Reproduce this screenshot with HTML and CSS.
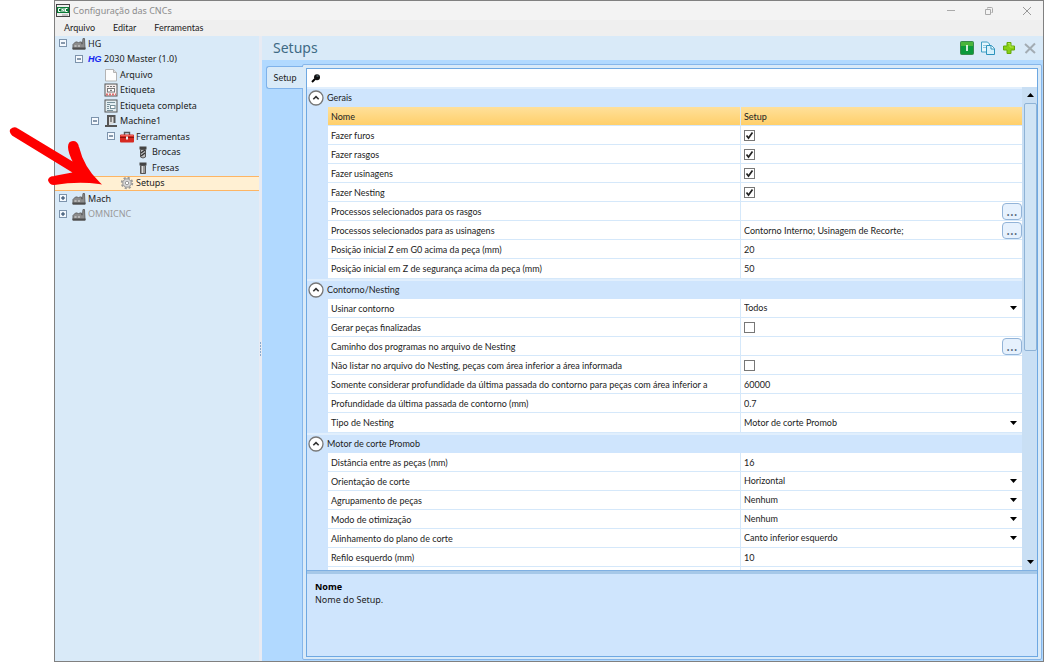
FILE: index.html
```html
<!DOCTYPE html>
<html lang="pt-BR">
	<head>
		<meta charset="UTF-8">
		<title>Configuração das CNCs</title>
		<link rel="stylesheet" href="styles.css">
	</head>
	<body>
		<svg class="defs" width="0" height="0" aria-hidden="true">
			<symbol id="factory" viewBox="0 0 14 13">
				<path d="M1 12V7.500L3.500 5H5.500L6.500 6L7.500 5H9.500V7H10.500L11 1.500H12.500L13 12Z" fill="#8c8c8c" stroke="#666"/>
				<path d="M2.500 8.500h2v1h-2zM6 8.500h2v1h-2z" fill="#e2e2e2"/>
				<path d="M.5 11.500h13" stroke="#4d4d4d" stroke-width="2"/>
			</symbol>
			<symbol id="minus" viewBox="0 0 9 9">
				<rect x=".5" y=".5" width="7" height="7" fill="#f4f9fe" stroke="#7c93ac"/>
				<path d="M2 4h4" stroke="#1d3a5c"/>
			</symbol>
			<symbol id="plus" viewBox="0 0 9 9">
				<rect x=".5" y=".5" width="7" height="7" fill="#f4f9fe" stroke="#7c93ac"/>
				<path d="M2 4h4M4 2v4" stroke="#1d3a5c"/>
			</symbol>
			<symbol id="up" viewBox="0 0 16 16">
				<circle cx="8" cy="8" r="7" fill="#fff" stroke="#777" stroke-width="1.300"/>
				<path d="M5.300 9.300L8 6.600l2.700 2.700" fill="none" stroke="#333" stroke-width="1.600"/>
			</symbol>
		</svg>
		<div class="window">
			<div class="titlebar">
				<svg class="logo" width="14" height="13" viewBox="0 0 14 13"><rect x=".5" y=".5" width="13" height="12" fill="#eee" stroke="#444"/><rect x="1" y="3" width="12" height="6" fill="#087a35"/><path d="M4.500 4.500h-2v3h2M6 8V4.500l2 3V4M11.500 4.500h-2v3h2" fill="none" stroke="#fff"/><path d="M6 11h6" stroke="#999"/></svg>
				<span class="caption">Configuração das CNCs</span>
				<button class="winbtn" aria-label="Minimizar"><svg width="10" height="10" viewBox="0 0 10 10"><path d="M1 4.500h8" stroke="#aaa"/></svg></button>
				<button class="winbtn" aria-label="Restaurar"><svg width="10" height="10" viewBox="0 0 10 10"><path d="M3.500 2.500v-1h4q1 0 1 1v4h-1M1.500 3.500h5v5h-5z" fill="none" stroke="#aaa"/></svg></button>
				<button class="winbtn" aria-label="Fechar"><svg width="10" height="10" viewBox="0 0 10 10"><path d="M1 1l8 8M9 1l-8 8" stroke="#999"/></svg></button>
			</div>
			<nav class="menubar">
				<button>Arquivo</button>
				<button>Editar</button>
				<button>Ferramentas</button>
			</nav>
			<div class="main">
				<aside class="side">
					<ul class="tree">
						<li class="d0"><button class="exp" aria-label="Recolher HG"><svg width="9" height="9"><use href="#minus"/></svg></button><svg width="14" height="13"><use href="#factory"/></svg><span>HG</span></li>
						<li class="d1"><button class="exp" aria-label="Recolher 2030 Master"><svg width="9" height="9"><use href="#minus"/></svg></button><i class="brand">HG</i><span>2030 Master (1.0)</span></li>
						<li class="d2"><b class="exp"></b><svg width="14" height="14" viewBox="0 0 14 14"><path d="M1.500 1.500h8l3 3v8.500h-11z" fill="#fdfdfd" stroke="#b4b4b4"/><path d="M9.500 1.500v3h3" fill="#ddd" stroke="#b4b4b4"/></svg><span>Arquivo</span></li>
						<li class="d2"><b class="exp"></b><svg width="14" height="14" viewBox="0 0 14 14"><rect x="1" y="1" width="12" height="12" fill="#f5eeee" stroke="#555"/><path d="M3 3.500h8" stroke="#777" stroke-dasharray="2 1"/><rect x="3.500" y="5.500" width="7" height="3.500" fill="#fff" stroke="#777"/><path d="M6 7.300h2" stroke="#555"/><path d="M2 11.500h10" stroke="#e07070" stroke-width="2" stroke-dasharray="2 1"/></svg><span>Etiqueta</span></li>
						<li class="d2"><b class="exp"></b><svg width="14" height="14" viewBox="0 0 14 14"><rect x="1" y="1" width="12" height="12" fill="#e3eef2" stroke="#555"/><path d="M3 3.500h8M3 5.500h3M3 7.500h2M3 9.500h2M3 11.500h6" stroke="#78909a"/><rect x="6.500" y="6.500" width="4.500" height="3" fill="#fff" stroke="#78909a"/></svg><span>Etiqueta completa</span></li>
						<li class="d2"><button class="exp" aria-label="Recolher Machine1"><svg width="9" height="9"><use href="#minus"/></svg></button><svg width="14" height="14" viewBox="0 0 14 14"><path d="M4 11.500V2h6.500v7" fill="#ddd" stroke="#555" stroke-width="2"/><path d="M7 3v5" stroke="#777" stroke-width="1.600"/><path d="M1 12h12" stroke="#555" stroke-width="2"/></svg><span>Machine1</span></li>
						<li class="d3"><button class="exp" aria-label="Recolher Ferramentas"><svg width="9" height="9"><use href="#minus"/></svg></button><svg width="14" height="14" viewBox="0 0 14 14"><path d="M4.500 5V2.500h5V5" fill="none" stroke="#555" stroke-width="1.400"/><rect x="0" y="4.500" width="14" height="8" rx="1" fill="#d62a22"/><path d="M0 7.500h14" stroke="#8e1410"/><path d="M1 5.500h12" stroke="#f0655a"/><rect x="6" y="6.500" width="2" height="3" fill="#eee"/></svg><span>Ferramentas</span></li>
						<li class="d4"><b class="exp"></b><svg width="14" height="14" viewBox="0 0 14 14"><path d="M3.500 1.500h7v3h-7z" fill="#444"/><path d="M4.500 4.500h5v7.500l-2.500 1-2.500-1z" fill="#bbb" stroke="#555"/><path d="M5 8l4-3M5 11l4-3" stroke="#333" stroke-width="1.300"/></svg><span>Brocas</span></li>
						<li class="d4"><b class="exp"></b><svg width="14" height="14" viewBox="0 0 14 14"><path d="M3.500 1.500h7v3h-7z" fill="#444"/><path d="M4.500 4.500h5v8h-5z" fill="#999" stroke="#555"/><path d="M6.500 5v7" stroke="#ddd"/></svg><span>Fresas</span></li>
						<li class="d3 selected"><b class="exp"></b><svg width="14" height="14" viewBox="0 0 14 14"><circle cx="7" cy="7" r="5.300" fill="none" stroke="#999" stroke-width="1.800" stroke-dasharray="2.200 1.960"/><circle cx="7" cy="7" r="4.200" fill="#d8d8d8" stroke="#999"/><circle cx="7" cy="7" r="1.700" fill="#fff" stroke="#999"/></svg><span>Setups</span></li>
						<li class="d0"><button class="exp" aria-label="Expandir Mach"><svg width="9" height="9"><use href="#plus"/></svg></button><svg width="14" height="13"><use href="#factory"/></svg><span>Mach</span></li>
						<li class="d0 off"><button class="exp" aria-label="Expandir OMNICNC"><svg width="9" height="9"><use href="#plus"/></svg></button><svg width="14" height="13"><use href="#factory"/></svg><span>OMNICNC</span></li>
					</ul>
				</aside>
				<div class="splitter"><svg width="3" height="16" viewBox="0 0 3 16"><path d="M1.500 1v15" stroke="#8aa9cc" stroke-width="1" stroke-dasharray="2 1"/></svg></div>
				<section class="content">
					<header class="head">
						<h1>Setups</h1>
						<button aria-label="Ativar"><svg width="14" height="14" viewBox="0 0 14 14"><rect x=".5" y=".5" width="13" height="13" rx="1" fill="#0c9a3c" stroke="#3b8a4c"/><path d="M1 1h12v4H1z" fill="#49b53c"/><path d="M7 4v6" stroke="#fff" stroke-width="1.600"/></svg></button>
						<button aria-label="Duplicar"><svg width="14" height="14" viewBox="0 0 14 14"><path d="M.5 1h6l2 2v8h-8z" fill="#e4f5fc" stroke="#3f9fc4"/><path d="M2 4.500h3M2 6.500h3" stroke="#8cc8e0"/><path d="M5.500 4.500h5l3 3v6h-8z" fill="#d5f0fb" stroke="#2d93bd"/><path d="M10 4.500v3.500h3.500" fill="#fff" stroke="#2d93bd"/></svg></button>
						<button aria-label="Adicionar"><svg width="14" height="14" viewBox="0 0 14 14"><path d="M5 1.500h4V5h3.500v4H9v3.500H5V9H1.500V5H5z" fill="#86d012" stroke="#65a80b"/><path d="M6 2.500h2V6h3.500" fill="none" stroke="#b4e84e"/></svg></button>
						<button aria-label="Excluir"><svg width="14" height="14" viewBox="0 0 14 14"><path d="M2 3l10 9M12 2.500L2.500 12" stroke="#a3acb3" stroke-width="2"/></svg></button>
					</header>
					<div class="body">
						<div class="tabs"><button class="tab">Setup</button></div>
						<div class="frame">
							<div class="panel">
								<div class="search">
									<svg width="10" height="10" viewBox="0 0 10 10"><circle cx="6" cy="4.300" r="3" fill="#111"/><path d="M4 6L1 9" stroke="#000" stroke-width="2"/><path d="M5.500 3h2" stroke="#6c8f9c"/></svg>
									<input type="text" aria-label="Pesquisar">
								</div>
								<div class="scroll">
									<div class="view">
										<table class="props">
											<colgroup><col class="gutter"><col class="name"><col></colgroup>
											<tbody>
												<tr class="group"><th colspan="3"><button aria-label="Recolher Gerais"><svg width="16" height="16"><use href="#up"/></svg></button><span>Gerais</span></th></tr>
												<tr class="current"><td></td><th><label for="p1">Nome</label></th><td><input id="p1" type="text" value="Setup"></td></tr>
												<tr><td></td><th><label for="p2">Fazer furos</label></th><td><input id="p2" type="checkbox" checked></td></tr>
												<tr><td></td><th><label for="p3">Fazer rasgos</label></th><td><input id="p3" type="checkbox" checked></td></tr>
												<tr><td></td><th><label for="p4">Fazer usinagens</label></th><td><input id="p4" type="checkbox" checked></td></tr>
												<tr><td></td><th><label for="p5">Fazer Nesting</label></th><td><input id="p5" type="checkbox" checked></td></tr>
												<tr><td></td><th><label for="p6">Processos selecionados para os rasgos</label></th><td><div class="pick"><input id="p6" type="text"><button aria-label="Selecionar rasgos">...</button></div></td></tr>
												<tr><td></td><th><label for="p7">Processos selecionados para as usinagens</label></th><td><div class="pick"><input id="p7" type="text" value="Contorno Interno; Usinagem de Recorte;"><button aria-label="Selecionar usinagens">...</button></div></td></tr>
												<tr><td></td><th><label for="p8">Posição inicial Z em G0 acima da peça (mm)</label></th><td><input id="p8" type="text" value="20"></td></tr>
												<tr><td></td><th><label for="p9">Posição inicial em Z de segurança acima da peça (mm)</label></th><td><input id="p9" type="text" value="50"></td></tr>
											</tbody>
											<tbody>
												<tr class="group"><th colspan="3"><button aria-label="Recolher Contorno/Nesting"><svg width="16" height="16"><use href="#up"/></svg></button><span>Contorno/Nesting</span></th></tr>
												<tr><td></td><th><label for="p10">Usinar contorno</label></th><td><select id="p10"><option>Todos</option></select></td></tr>
												<tr><td></td><th><label for="p11">Gerar peças finalizadas</label></th><td><input id="p11" type="checkbox"></td></tr>
												<tr><td></td><th><label for="p12">Caminho dos programas no arquivo de Nesting</label></th><td><div class="pick"><input id="p12" type="text"><button aria-label="Selecionar caminho">...</button></div></td></tr>
												<tr><td></td><th><label for="p13">Não listar no arquivo do Nesting, peças com área inferior a área informada</label></th><td><input id="p13" type="checkbox"></td></tr>
												<tr><td></td><th><label for="p14">Somente considerar profundidade da última passada do contorno para peças com área inferior a</label></th><td><input id="p14" type="text" value="60000"></td></tr>
												<tr><td></td><th><label for="p15">Profundidade da última passada de contorno (mm)</label></th><td><input id="p15" type="text" value="0.7"></td></tr>
												<tr><td></td><th><label for="p16">Tipo de Nesting</label></th><td><select id="p16"><option>Motor de corte Promob</option></select></td></tr>
											</tbody>
											<tbody>
												<tr class="group"><th colspan="3"><button aria-label="Recolher Motor de corte Promob"><svg width="16" height="16"><use href="#up"/></svg></button><span>Motor de corte Promob</span></th></tr>
												<tr><td></td><th><label for="p17">Distância entre as peças (mm)</label></th><td><input id="p17" type="text" value="16"></td></tr>
												<tr><td></td><th><label for="p18">Orientação de corte</label></th><td><select id="p18"><option>Horizontal</option></select></td></tr>
												<tr><td></td><th><label for="p19">Agrupamento de peças</label></th><td><select id="p19"><option>Nenhum</option></select></td></tr>
												<tr><td></td><th><label for="p20">Modo de otimização</label></th><td><select id="p20"><option>Nenhum</option></select></td></tr>
												<tr><td></td><th><label for="p21">Alinhamento do plano de corte</label></th><td><select id="p21"><option>Canto inferior esquerdo</option></select></td></tr>
												<tr><td></td><th><label for="p22">Refilo esquerdo (mm)</label></th><td><input id="p22" type="text" value="10"></td></tr>
												<tr><td></td><th></th><td></td></tr>
											</tbody>
										</table>
									</div>
									<div class="scrollbar">
										<button aria-label="Rolar para cima"><svg width="7" height="4" viewBox="0 0 7 4"><path d="M0 4h7L3.500 0z"/></svg></button>
										<div class="track"><div class="thumb"></div></div>
										<button aria-label="Rolar para baixo"><svg width="7" height="4" viewBox="0 0 7 4"><path d="M0 0h7L3.500 4z"/></svg></button>
									</div>
								</div>
								<div class="help">
									<h2>Nome</h2>
									<p>Nome do Setup.</p>
								</div>
							</div>
						</div>
					</div>
				</section>
			</div>
		</div>
		<svg class="arrow" width="94" height="64" viewBox="8 124 94 64" aria-hidden="true"><path d="M17 129L75 164Q69 153 69 147Q69 142 73 142Q77 142 78 147Q83 168 99 183Q78 180 54 184Q50 184 49 180Q50 177 54 177L75 173L13 135Q10 132 11 130Q14 127 17 129Z" fill="#fe0000" stroke="#fe0000" stroke-width="2"/></svg>
	</body>
</html>
```

FILE: styles.css
```css
*{margin: 0;padding: 0;box-sizing: border-box;}
body{background: #fff;font: 9px/12px "Noto Sans","Open Sans",sans-serif;color: #222;}
button,input,select{font: inherit;color: inherit;border: 0;background: none;}
svg{display: block;flex: none;}
ul{list-style: none;}
.defs{position: absolute;}

.window{margin-left: 54px;height: 100vh;border: 1px solid #808080;display: flex;flex-direction: column;background: #f3f3f3;}
.titlebar{height: 19px;display: flex;align-items: center;padding: 0 1px;}
.caption{flex: 1;margin-left: 3px;color: #8c8c8c;}
.winbtn{width: 38px;height: 18px;display: flex;align-items: center;justify-content: center;}
.winbtn:last-child{margin-right: -4px;}
.menubar{height: 16px;background: #efefef;display: flex;align-items: center;gap: 18px;padding-left: 9px;font: 9px/12px Lato,sans-serif;}
.main{flex: 1;min-height: 0;display: flex;}

/* arvore */
.side{width: 204px;background: #d9eaf8;}
.tree{height: 186px;display: flex;flex-direction: column;}
.tree li{flex: 1;display: flex;align-items: center;padding-left: 4px;}
.tree li.d1{padding-left: 20px;}
.tree li.d2{padding-left: 36px;}
.tree li.d3{padding-left: 52px;}
.tree li.d4{padding-left: 68px;}
.tree span{margin-left: 2px;white-space: nowrap;}
.tree .selected{background: #fff0d3;box-shadow: inset 0 1px #fdb564,inset 0 -1px #fdb564;}
.tree .off span{color: #999;}
.exp{width: 9px;height: 9px;margin-right: 4px;}
.brand{width: 14px;font: italic bold 9px/12px "Liberation Sans",sans-serif;color: #1226f0;}
.splitter{width: 3px;background: #e8ebf3;display: flex;align-items: center;}

/* conteudo */
.content{flex: 1;min-width: 0;display: flex;flex-direction: column;background: #b1d9ff;}
.head{height: 24px;display: flex;align-items: center;gap: 7px;padding: 0 6px 0 11px;background: #d9eaf8;}
.head h1{flex: 1;font-size: 14px;line-height: 20px;font-weight: normal;color: #3f6a85;}
.body{flex: 1;min-height: 0;display: flex;padding: 4px 1px 1px 4px;}
.tabs{width: 37px;padding-top: 2px;margin-right: -1px;z-index: 1;}
.tab{width: 37px;height: 23px;font: 9px/12px Lato,sans-serif;background: #d9eaf8;border: 1px solid #7fb2ea;border-right: 0;border-radius: 3px 0 0 3px;}
.frame{flex: 1;min-width: 0;display: flex;padding: 3px 3px 2px;background: #d9eaf8;border: 1px solid #86b6ea;border-radius: 2px;}
.panel{flex: 1;min-width: 0;display: flex;flex-direction: column;border: 1px solid #6ea8e2;background: #cfe5fd;}
.search{height: 18px;display: flex;align-items: center;gap: 4px;padding-left: 4px;background: #fff;}
.search input{flex: 1;min-width: 0;outline: 0;}
.scroll{flex: 1;min-height: 0;display: flex;}
.view{flex: 1;min-width: 0;overflow: hidden;}

.props{width: 100%;table-layout: fixed;border-collapse: separate;border-spacing: 0;font: 9px/12px Lato,sans-serif;}
.gutter{width: 21px;}
.name{width: 412px;}
.props th{font-weight: normal;text-align: left;}
.props tr{height: 19px;}
.props th,.props td{height: 19px;background: #fff;border-bottom: 1px solid #d5e8fa;padding: 0 0 0 3px;white-space: nowrap;overflow: hidden;}
.props th{padding-top: 1px;}
.props td:first-child{background: none;border: 0;}
.props td:last-child{border-left: 1px solid #d5e8fa;}
.props tr:last-child th,.props tr:last-child td{height: 20px;}
.props .group th{height: 20px;padding: 0 0 0 1px;background: #cfe5fd;border-top: 2px solid #e1effd;border-bottom: 0;}
.group button{width: 16px;height: 16px;vertical-align: middle;}
.group span{margin-left: 3px;vertical-align: middle;}
.props .current th,.props .current td:last-child{background: linear-gradient(#ffe09a,#ffcf6a);}
.props input[type=text],.props select{display: block;width: 100%;height: 14px;outline: 0;}
.props select{appearance: none;background: url("data:image/svg+xml,%3Csvg xmlns='http://www.w3.org/2000/svg' width='7' height='4'%3E%3Cpath d='M0 0h7L3.5 4z'/%3E%3C/svg%3E") no-repeat right 5px center;}
.props input[type=checkbox]{appearance: none;display: block;width: 11px;height: 11px;border: 1px solid #777;background: #fff;}
.props input[type=checkbox]:checked{background: #fff url("data:image/svg+xml,%3Csvg xmlns='http://www.w3.org/2000/svg' width='9' height='9'%3E%3Cpath d='M1.500 4.500L3.500 7L7.500 1.500' fill='none' stroke='%23222' stroke-width='1.700'/%3E%3C/svg%3E") no-repeat center;}
.pick{display: flex;align-items: center;}
.pick input{flex: 1;min-width: 0;}
.pick button{width: 20px;height: 17px;flex: none;border: 1px solid #93b4d8;border-radius: 4px;background: #e6f1fd;font: 14px/10px "Noto Sans",sans-serif;color: #567;}

.scrollbar{width: 15px;display: flex;flex-direction: column;padding-left: 2px;background: #c9dff4;}
.scrollbar button{height: 16px;display: flex;align-items: center;justify-content: center;}
.track{flex: 1;}
.thumb{height: 55%;border: 1px solid #8fb3d6;border-radius: 2px;background: #d0e4f5;}

.help{height: 86px;padding: 9px 8px;border-top: 1px solid #7fb0e2;box-shadow: inset 0 3px #a6c8e8;}
.help h2{font-size: 9px;line-height: 13px;color: #000;}
.help p{line-height: 13px;}

.arrow{position: absolute;left: 8px;top: 124px;}
```
